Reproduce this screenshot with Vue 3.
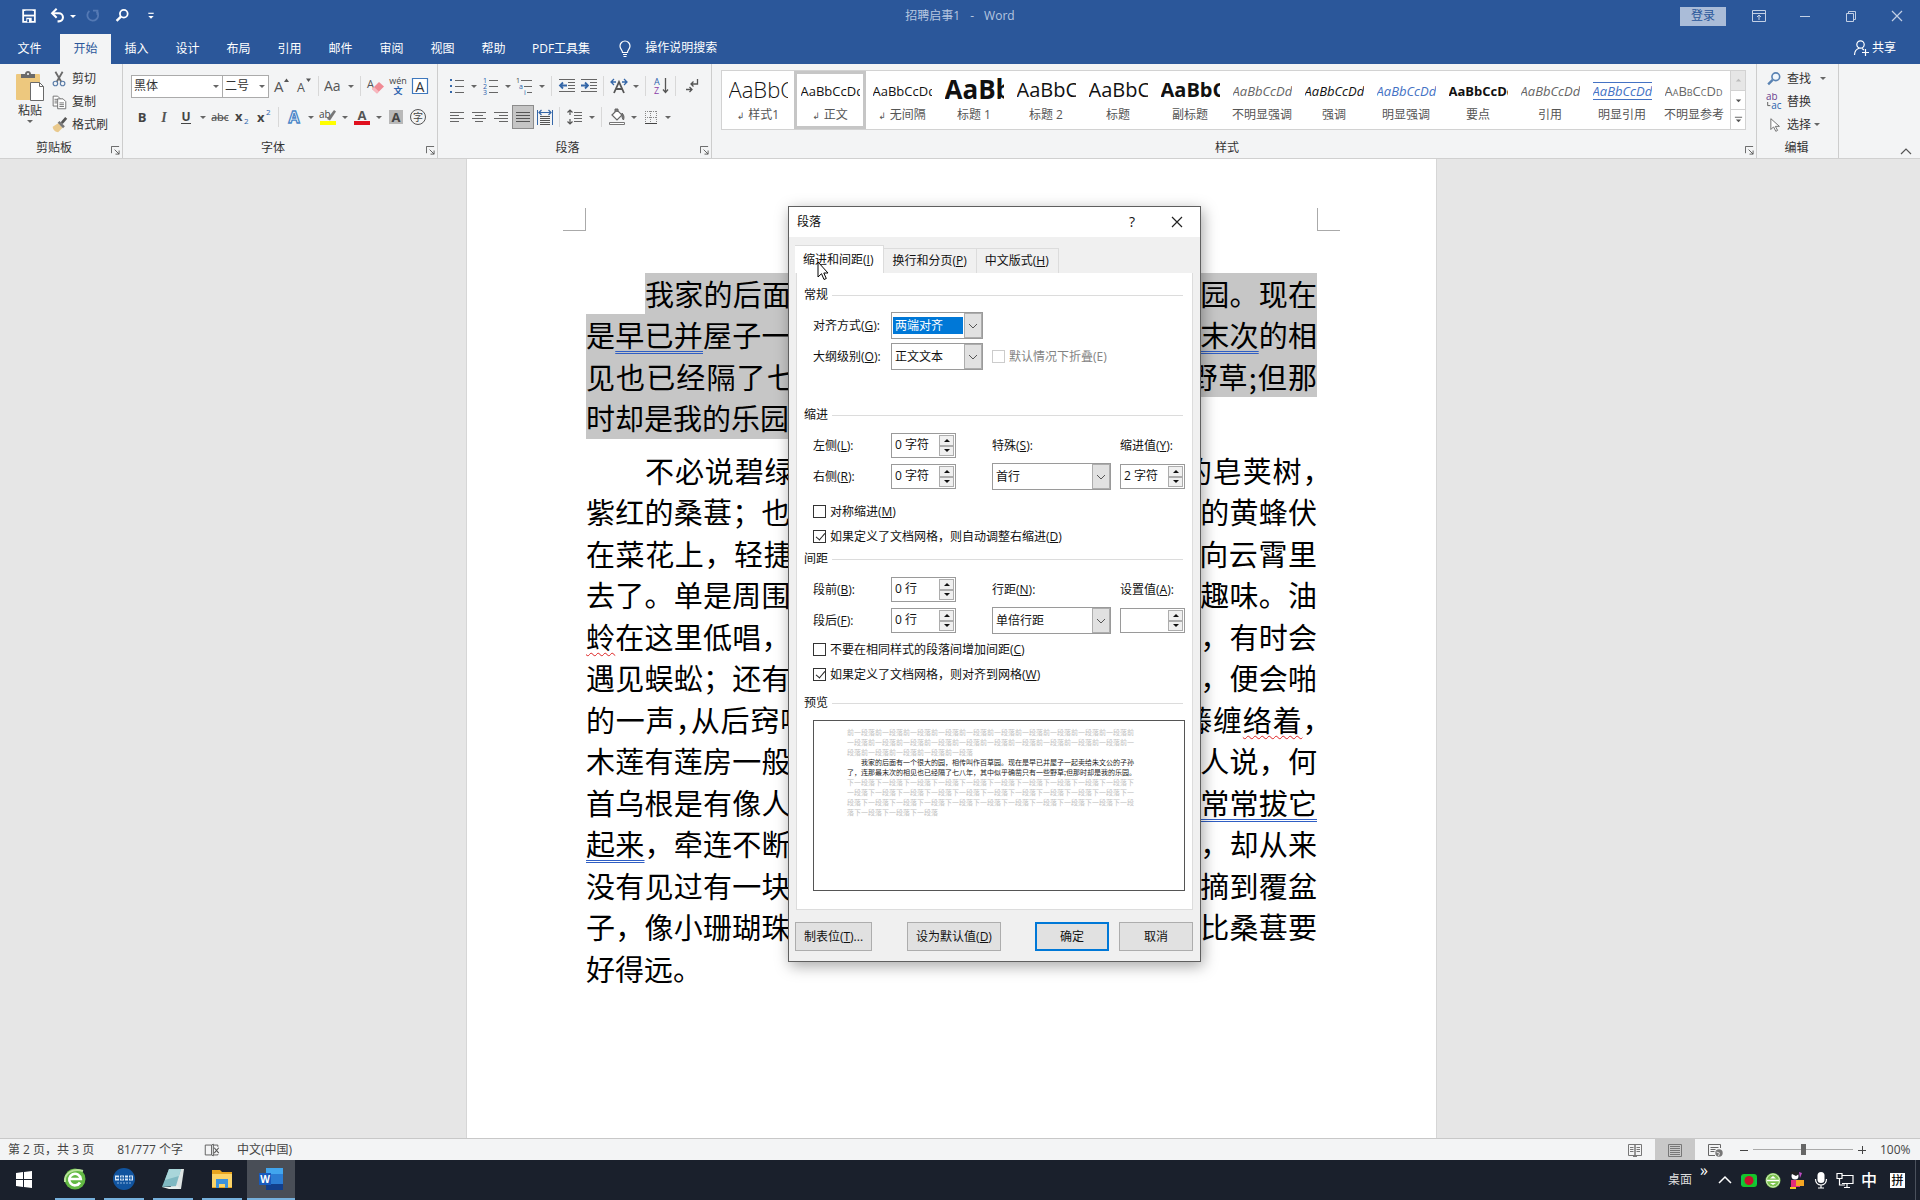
<script setup>
import { ref } from 'vue'

const icons = {
  save: '<path d="M3.500 3.500h13v13h-13z" fill="none" stroke="#fff" stroke-width="2"/><path d="M6 4h8v5H6z" fill="#2b579a"/><path d="M4 9.500h12" stroke="#fff" stroke-width="2"/><path d="M7 12h6v5H7z" fill="#fff"/><path d="M8 13.500h2V17H8z" fill="#2b579a"/>',
  undo: '<path d="M4 7h7a4.500 4.500 0 0 1 0 9H9.500" fill="none" stroke="#fff" stroke-width="2.300"/><path d="M8.500 2 3.500 7l5 5" fill="none" stroke="#fff" stroke-width="2.300"/>',
  redo: '<path d="M6 4.500A6 6 0 1 0 14 5" fill="none" stroke="#5479b4" stroke-width="2"/><path d="M10 4h5v5" fill="none" stroke="#5479b4" stroke-width="2"/>',
  find: '<circle cx="12" cy="7.500" r="4.300" fill="none" stroke="#fff" stroke-width="2"/><path d="M8.800 10.700 4 15.500" stroke="#fff" stroke-width="2.600"/>',
  custom: '<path d="M7 7h6" stroke="#fff" stroke-width="1.300"/><path d="M7 10h6l-3 3z" fill="#fff"/>',
  ribbon: '<path d="M3.500 4.500h13v11h-13zM3.500 7.500h13" fill="none" stroke="#c3d0e5"/><path d="M10 14V9.500M8 11l2-2 2 2" fill="none" stroke="#c3d0e5"/>',
  min: '<path d="M5 10.500h10" stroke="#c3d0e5"/>',
  restore: '<path d="M5.500 7.500h7v8h-7zM7.500 7V5.500h7v8H13" fill="none" stroke="#c3d0e5"/>',
  close: '<path d="m5 5 10 10M15 5 5 15" stroke="#c3d0e5" stroke-width="1.200"/>',
  bulb: '<path d="M7.500 14.500c0-2.500-2.500-3.300-2.500-6.500a5 5 0 0 1 10 0c0 3.200-2.500 4-2.500 6.500zM8 16.500h4M8.500 18.500h3" fill="none" stroke="#fff" stroke-width="1.200"/>',
  share: '<circle cx="9.500" cy="6.500" r="3.700" fill="none" stroke="#fff" stroke-width="1.200"/><path d="M3.500 17c0-4 2-6 5-7M11 10.500l2 1.500M14.500 11v7M11 14.500h7" fill="none" stroke="#fff" stroke-width="1.200"/>',
  cut: '<path d="m6 2 6.500 11M14 2 7.500 13" stroke="#6a6a6a" stroke-width="2"/><circle cx="6" cy="15" r="2.500" fill="none" stroke="#5b7da8" stroke-width="1.300"/><circle cx="14" cy="15" r="2.500" fill="none" stroke="#5b7da8" stroke-width="1.300"/>',
  copy: '<path d="M3.500 3.500h5l3 3v8h-8z" fill="#fff" stroke="#6a6a6a"/><path d="M5 7h4M5 9h3M5 11h3" stroke="#6a6a6a"/><path d="M8.500 6.500h6l3 3v8h-9z" fill="#fff" stroke="#6a6a6a"/><path d="M10.500 11h5M10.500 13h5M10.500 15h5" stroke="#6a6a6a"/>',
  brush: '<path d="m3 12 6-4 5 5-5 5c-3 0-6-3-6-6z" fill="#e9c98d"/><path d="m8.500 7.500 2-2 6 6-2 2z" fill="#777"/><path d="m13 8 5-6" stroke="#555" stroke-width="3"/>',
  grow: '<text x="2" y="16" font-size="15" fill="#555">A</text><path d="m12 6 2.500-3.500L17 6z" fill="#555"/>',
  shrink: '<text x="3" y="16" font-size="12.500" fill="#555">A</text><path d="m12 2.500 2.500 3.500L17 2.500z" fill="#555"/>',
  aa: '<text x="0" y="15" font-size="14" fill="#555">Aa</text>',
  eraser: '<text x="1" y="12" font-size="11" fill="#555">A</text><path d="m6 13 7-7 5 4.500-7 7z" fill="#f08a94"/><path d="m6 13 2-2 5 4.500-2 2z" fill="#f8b8bf"/>',
  pinyin: '<text x="10" y="8" text-anchor="middle" font-size="9" fill="#444">wén</text><text x="10" y="18" text-anchor="middle" font-size="9" fill="#2b62ad" font-weight="700">文</text>',
  boxa: '<path d="M2.500 2.500h15v15h-15z" fill="#fff" stroke="#3f78bd" stroke-width="1.200"/><text x="10" y="15.500" text-anchor="middle" font-size="14" fill="#333">A</text>',
  bold: '<text x="10" y="15" text-anchor="middle" font-size="13" font-weight="700" fill="#444">B</text>',
  italic: '<text x="10" y="15" text-anchor="middle" font-size="14" font-style="italic" font-family="Liberation Serif" font-weight="700" fill="#555">I</text>',
  underline: '<text x="10" y="14" text-anchor="middle" font-size="12" font-weight="700" fill="#444">U</text><path d="M5 16.500h10" stroke="#444"/>',
  strike: '<text x="10" y="14" text-anchor="middle" font-size="11" fill="#444">abc</text><path d="M2 11h16" stroke="#444"/>',
  sub: '<text x="3" y="14" font-size="13" font-weight="700" fill="#444">x</text><text x="12" y="17" font-size="8" fill="#2b62ad">2</text>',
  sup: '<text x="3" y="15" font-size="13" font-weight="700" fill="#444">x</text><text x="12" y="8" font-size="8" fill="#2b62ad">2</text>',
  effect: '<text x="10" y="15.500" text-anchor="middle" font-size="16" font-weight="700" fill="#fff" stroke="#4a86c8" stroke-width="1.300">A</text>',
  marker: '<text x="1" y="11" font-size="10" fill="#444">ab</text><path d="m9 12 7-9 2 1.500-6 9z" fill="#777"/><path d="M2 14h16v4H2z" fill="#ff0"/>',
  color: '<text x="10" y="13" text-anchor="middle" font-size="13" font-weight="700" fill="#555">A</text><path d="M2 14h16v4H2z" fill="#e0101e"/>',
  shade: '<path d="M3 3h14v14H3z" fill="#b8b8b8"/><text x="10" y="15" text-anchor="middle" font-size="13" font-weight="700" fill="#444">A</text>',
  circle: '<circle cx="10" cy="10" r="7.500" fill="none" stroke="#555"/><text x="10" y="14" text-anchor="middle" font-size="10" fill="#444">字</text>',
  bullets: '<path d="M3 3h2v2H3zM3 9h2v2H3zM3 15h2v2H3z" fill="#3567a8"/><path d="M8 4.500h9M8 10.500h9M8 16.500h9" stroke="#666"/>',
  numbers: '<text x="2" y="6.500" font-size="7" fill="#2b62ad">1</text><text x="2" y="12.500" font-size="7" fill="#2b62ad">2</text><text x="2" y="18.500" font-size="7" fill="#2b62ad">3</text><path d="M8 4.500h9M8 10.500h9M8 16.500h9" stroke="#666"/>',
  multi: '<text x="1" y="6.500" font-size="7" fill="#444">1</text><text x="4" y="13" font-size="7" fill="#2b62ad">a</text><text x="9" y="18.500" font-size="7" fill="#2b62ad">i</text><path d="M6 4.500h11M9 10.500h8M12 16.500h5" stroke="#666"/>',
  outdent: '<path d="M2 3.500h16M11 6.500h7M11 9.500h7M11 12.500h7M2 15.500h16" stroke="#666"/><path d="M10 9.500H4M6 6.500l-3 3 3 3" fill="none" stroke="#3567a8" stroke-width="1.800"/>',
  indent: '<path d="M2 3.500h16M11 6.500h7M11 9.500h7M11 12.500h7M2 15.500h16" stroke="#666"/><path d="M2 9.500h6M6 6.500l3 3-3 3" fill="none" stroke="#3567a8" stroke-width="1.800"/>',
  chlayout: '<path d="m5 17 5-11 5 11M7 13h6" fill="none" stroke="#555" stroke-width="1.800"/><path d="M5 3 2 6l3 3M2 6h5M15 3l3 3-3 3M18 6h-5" fill="none" stroke="#3567a8" stroke-width="1.300"/>',
  sort: '<text x="3" y="9" font-size="9" fill="#2b62ad">A</text><text x="3" y="18" font-size="9" fill="#8a3fa8">Z</text><path d="M14.500 2v14M12 13.500l2.500 3 2.500-3" fill="none" stroke="#555" stroke-width="1.300"/>',
  marks: '<path d="M16.500 3v5H10M12.500 5.500 10 8l2.500 2.500M5 13.500h6M8.500 11l2.500 2.500L8.500 16" fill="none" stroke="#555" stroke-width="1.300"/>',
  left: '<path d="M3 5.500h14M3 8.500h9M3 11.500h14M3 14.500h9" stroke="#666"/>',
  center: '<path d="M3 5.500h14M6 8.500h8M3 11.500h14M6 14.500h8" stroke="#666"/>',
  right: '<path d="M3 5.500h14M8 8.500h9M3 11.500h14M8 14.500h9" stroke="#666"/>',
  justify: '<path d="M3 5.500h14M3 8.500h14M3 11.500h14M3 14.500h14" stroke="#555"/>',
  dist: '<path d="M2.500 3v15M17.500 3v15" stroke="#3567a8"/><path d="M4 5.500h12M6.500 3 4 5.500 6.500 8M13.500 3 16 5.500 13.500 8" fill="none" stroke="#3567a8" stroke-width="1.200"/><path d="M5 9.500h10M5 11.500h10M5 13.500h10M5 15.500h10M5 17.500h10" stroke="#555"/>',
  spacing: '<path d="M5 3v5M2.500 5.500 5 3l2.500 2.500M5 12v5M2.500 14.500 5 17l2.500-2.500" fill="none" stroke="#555" stroke-width="1.200"/><path d="M9 5.500h8M9 8.500h8M9 11.500h8M9 14.500h8" stroke="#666"/>',
  bucket: '<path d="m5 8 5-5 5 5-5 5z" fill="#fff" stroke="#666" stroke-width="1.200"/><path d="M8 5V2h3v3M15 6c2 2 2.500 4 1.500 7-1-1-2-3-1.500-7z" fill="#777" stroke="#666"/><path d="M2.500 15.500h15v2h-15z" fill="#fff" stroke="#777"/>',
  borders: '<path d="M4.500 4v12M9.500 4v12M15.500 4v12M4 4.500h12M4 10.500h12" stroke="#888" stroke-dasharray="1 1"/><path d="M4 16.500h12" stroke="#444"/>',
  find2: '<circle cx="12" cy="7.500" r="4.300" fill="#f2f7fc" stroke="#5a83b3" stroke-width="1.800"/><path d="M8.500 11 3.500 16" stroke="#5a83b3" stroke-width="2.600"/>',
  replace: '<text x="1" y="8" font-size="11" fill="#6b3f8f">ab</text><text x="7" y="18" font-size="11" fill="#2b62ad">ac</text><path d="M3 10v4h3" fill="none" stroke="#555"/>',
  select: '<path d="M6.500 3v12l3-3 2.500 5 2-1-2.500-4.500H16z" fill="#fff" stroke="#666"/>',
  proof: '<path d="M9.500 4.500h-7v11h7zM9.500 4.500l2-1v13l-2-1M11.500 4.500h5v2M11.500 15.500h5v-1" fill="none" stroke="#555"/><path d="m12.500 7.500 5 6M17.500 7.500l-5 6" stroke="#555" stroke-width="1.200"/>',
  read: '<path d="M3.500 4.500h6.500v11H3.500zM10 4.500h6.500v11H10zM8 16.500h4M5 7.500h3.500M5 9.500h3.500M5 11.500h3.500M11.500 7.500H15M11.500 9.500H15M11.500 11.500H15" fill="none" stroke="#777"/>',
  print: '<path d="M3.500 4.500h13v12h-13zM5 6.500h10M5 8.500h10M5 10.500h10M5 12.500h10M5 14.500h10" fill="none" stroke="#777"/>',
  web: '<path d="M10 15.500H3.500v-11h12V8M5.500 7.500h8M5.500 9.500h5M5.500 11.500h4" fill="none" stroke="#666"/><circle cx="14" cy="13" r="3.700" fill="#777"/><path d="m11.500 12 3 1-1 3" stroke="#ddd" fill="none"/>'
}

const windowTools = [['ribbon', '功能区显示选项'], ['min', '最小化'], ['restore', '还原'], ['close', '关闭']]
const tabs = ['插入', '设计', '布局', '引用', '邮件', '审阅', '视图', '帮助', 'PDF工具集']

const C = 'caret'
const S = 'sep'
const fontTop = ['grow', 'shrink', S, 'aa', C, S, 'eraser', 'pinyin', 'boxa']
const fontBottom = ['bold', 'italic', 'underline', C, 'strike', 'sub', 'sup', S, 'effect', C, 'marker', C, 'color', C, 'shade', 'circle']
const paraTop = ['bullets', C, 'numbers', C, 'multi', C, S, 'outdent', 'indent', S, 'chlayout', C, S, 'sort', S, 'marks']
const paraBottom = ['left', 'center', 'right', 'justify', 'dist', S, 'spacing', C, S, 'bucket', C, 'borders', C]

const styles = [
  { name: '样式1', kind: 'large', mark: true },
  { name: '正文', kind: 'body', mark: true, current: true },
  { name: '无间隔', kind: 'body', mark: true },
  { name: '标题 1', kind: 'title1' },
  { name: '标题 2', kind: 'title2' },
  { name: '标题', kind: 'title2' },
  { name: '副标题', kind: 'title2 strong' },
  { name: '不明显强调', kind: 'body slanted muted' },
  { name: '强调', kind: 'body slanted' },
  { name: '明显强调', kind: 'body slanted blue' },
  { name: '要点', kind: 'body strong' },
  { name: '引用', kind: 'body slanted muted' },
  { name: '明显引用', kind: 'body slanted blue ruled' },
  { name: '不明显参考', kind: 'body caps muted' }
]

// Runs: plain text, or [text, mark]; mark is a grammar or spelling line, or half-width punctuation.
const first = [
  ['我家的后面有一个很大的园，相传叫作百草园。现在'],
  ['是', ['早已并', 'grammar'], '屋子一起卖给朱文公的子孙了，', ['连那最末次', 'grammar'], '的相'],
  ['见也已经隔了七八年，其中似乎确凿只有一些野草;但那'],
  ['时却是我的乐园。']
]
const second = [
  ['不必说碧绿的菜畦，光滑的石井栏，高大的皂荚树', ['，', 'half']],
  ['紫红的桑葚；也不必说鸣蝉在树叶里长吟，肥胖的黄蜂伏'],
  ['在菜花上，轻捷的叫天子(云雀)忽然从草间直窜向云霄里'],
  ['去了。单是周围的短短的泥墙根一带，就有无限趣味。油'],
  [['蛉', 'spelling'], '在这里低唱，蟋蟀们在这里弹琴。翻开断砖来，有时会'],
  ['遇见蜈蚣；还有斑蝥，倘若用手指按住它的脊梁，便会啪'],
  [['的一声，从后窍喷出一阵烟雾。何首乌藤和木莲藤缠', 'half'], ['络着', 'spelling'], ['，', 'half']],
  ['木莲有莲房一般的果实，何首乌有臃肿的根。有人说，何'],
  ['首乌根是有像人形的，吃了便可以成仙，我于是', ['常常拔它', 'grammar']],
  [['起来', 'grammar'], '，牵连不断地拔起来，也曾因此弄坏了泥墙，却从来'],
  ['没有见过有一块根像人样。如果不怕刺，还可以摘到覆盆'],
  ['子，像小珊瑚珠攒成的小球，又酸又甜，色味都比桑葚要'],
  ['好得远。']
]
const runText = (r) => (Array.isArray(r) ? r[0] : r)
const runMark = (r) => (Array.isArray(r) ? r[1] : '')

const fontName = ref('黑体')
const fontSize = ref('二号')
const zoomLevel = ref(50)
const before = '前一段落'.repeat(25)
const after = '下一段落'.repeat(34)
</script>

<template>
  <div class="app">
    <header class="top">
      <div class="titlebar">
        <div class="quick">
          <button class="q" aria-label="保存"><svg viewBox="0 0 20 20" v-html="icons.save"></svg></button>
          <button class="q" aria-label="撤消"><svg viewBox="0 0 20 20" v-html="icons.undo"></svg></button>
          <i class="caret light"></i>
          <button class="q" aria-label="重复"><svg viewBox="0 0 20 20" v-html="icons.redo"></svg></button>
          <button class="q" aria-label="查找"><svg viewBox="0 0 20 20" v-html="icons.find"></svg></button>
          <button class="q" aria-label="自定义"><svg viewBox="0 0 20 20" v-html="icons.custom"></svg></button>
        </div>
        <div class="doc-name"><span>招聘启事1</span><span>-</span><span>Word</span></div>
        <div class="win">
          <button class="login">登录</button>
          <button v-for="t in windowTools" :key="t[0]" class="wbtn" :aria-label="t[1]"><svg viewBox="0 0 20 20" v-html="icons[t[0]]"></svg></button>
        </div>
      </div>
      <nav class="tabs">
        <button class="tab file">文件</button>
        <button class="tab active">开始</button>
        <button v-for="t in tabs" :key="t" class="tab">{{ t }}</button>
        <button class="tell"><svg viewBox="0 0 20 20" v-html="icons.bulb"></svg>操作说明搜索</button>
        <button class="share"><svg viewBox="0 0 20 20" v-html="icons.share"></svg>共享</button>
      </nav>
    </header>

    <section class="ribbon">
      <div class="group clip">
        <div class="clip-body">
          <button class="paste">
            <svg viewBox="0 0 30 32"><rect x="1" y="4" width="24" height="26" rx="1" fill="#edc87e" /><path d="M6 8V4h4c0-4 6-4 6 0h4v4z" fill="#6a6a6a" /><circle cx="13" cy="4" r="1" fill="#fff" /><path d="M15.500 12.500h9l4 4v14h-13z" fill="#fff" stroke="#6a6a6a" /><path d="M24.500 12.500v4h4" fill="none" stroke="#6a6a6a" /></svg>
            <span>粘贴</span><i class="caret"></i>
          </button>
          <div class="stack">
            <button class="cmd"><svg viewBox="0 0 20 20" v-html="icons.cut"></svg>剪切</button>
            <button class="cmd"><svg viewBox="0 0 20 20" v-html="icons.copy"></svg>复制</button>
            <button class="cmd"><svg viewBox="0 0 20 20" v-html="icons.brush"></svg>格式刷</button>
          </div>
        </div>
        <div class="foot"><span>剪贴板</span><svg class="launch" viewBox="0 0 10 10"><path d="M.5 8V.5H9M4 4l5 5M9 5v4H5" fill="none" stroke="#555" /></svg></div>
      </div>

      <div class="group font">
        <div class="tools">
          <label class="fbox name"><input v-model="fontName" aria-label="字体" /><i class="caret"></i></label>
          <label class="fbox size"><input v-model="fontSize" aria-label="字号" /><i class="caret"></i></label>
          <template v-for="(k, i) in fontTop" :key="i">
            <i v-if="k === 'caret'" class="caret"></i><i v-else-if="k === 'sep'" class="sep"></i>
            <button v-else class="tool" :aria-label="k"><svg viewBox="0 0 20 20" v-html="icons[k]"></svg></button>
          </template>
        </div>
        <div class="tools">
          <template v-for="(k, i) in fontBottom" :key="i">
            <i v-if="k === 'caret'" class="caret"></i><i v-else-if="k === 'sep'" class="sep"></i>
            <button v-else class="tool" :aria-label="k"><svg viewBox="0 0 20 20" v-html="icons[k]"></svg></button>
          </template>
        </div>
        <div class="foot"><span>字体</span><svg class="launch" viewBox="0 0 10 10"><path d="M.5 8V.5H9M4 4l5 5M9 5v4H5" fill="none" stroke="#555" /></svg></div>
      </div>

      <div class="group para">
        <div class="tools">
          <template v-for="(k, i) in paraTop" :key="i">
            <i v-if="k === 'caret'" class="caret"></i><i v-else-if="k === 'sep'" class="sep"></i>
            <button v-else class="tool" :aria-label="k"><svg viewBox="0 0 20 20" v-html="icons[k]"></svg></button>
          </template>
        </div>
        <div class="tools">
          <template v-for="(k, i) in paraBottom" :key="i">
            <i v-if="k === 'caret'" class="caret"></i><i v-else-if="k === 'sep'" class="sep"></i>
            <button v-else class="tool" :class="{ on: k === 'justify' }" :aria-label="k"><svg viewBox="0 0 20 20" v-html="icons[k]"></svg></button>
          </template>
        </div>
        <div class="foot"><span>段落</span><svg class="launch" viewBox="0 0 10 10"><path d="M.5 8V.5H9M4 4l5 5M9 5v4H5" fill="none" stroke="#555" /></svg></div>
      </div>

      <div class="group styles">
        <div class="gallery">
          <button v-for="s in styles" :key="s.name" class="card" :class="{ current: s.current }">
            <span class="sample" :class="s.kind">AaBbCcDd</span>
            <span class="style-name"><small v-if="s.mark">↲</small>{{ s.name }}</span>
          </button>
          <div class="scroll">
            <button class="dim" aria-label="上一行"><svg viewBox="0 0 10 10"><path d="M2 6h6L5 3z" fill="#bbb" /></svg></button>
            <button aria-label="下一行"><svg viewBox="0 0 10 10"><path d="M2 4h6L5 7z" fill="#555" /></svg></button>
            <button aria-label="其他"><svg viewBox="0 0 10 10"><path d="M2 5h6L5 8z" fill="#555" /><path d="M1 2.500h8" stroke="#555" /></svg></button>
          </div>
        </div>
        <div class="foot"><span>样式</span><svg class="launch" viewBox="0 0 10 10"><path d="M.5 8V.5H9M4 4l5 5M9 5v4H5" fill="none" stroke="#555" /></svg></div>
      </div>

      <div class="group edit">
        <div class="stack">
          <button class="cmd"><svg viewBox="0 0 20 20" v-html="icons.find2"></svg>查找<i class="caret far"></i></button>
          <button class="cmd"><svg viewBox="0 0 20 20" v-html="icons.replace"></svg>替换</button>
          <button class="cmd"><svg viewBox="0 0 20 20" v-html="icons.select"></svg>选择<i class="caret"></i></button>
        </div>
        <div class="foot"><span>编辑</span></div>
      </div>
      <div class="ribbon-end">
        <button aria-label="折叠功能区"><svg viewBox="0 0 12 8"><path d="m1 7 5-5 5 5" fill="none" stroke="#555" stroke-width="1.200" /></svg></button>
      </div>
    </section>

    <main class="workspace">
      <article class="page">
        <div class="corners"><i></i><i></i></div>
        <div class="text selected">
          <div v-for="(l, i) in first" :key="i" class="line" :class="{ start: i === 0, last: i === first.length - 1 }">
            <span class="hl"><span v-for="(r, j) in l" :key="j" :class="runMark(r)">{{ runText(r) }}</span></span>
          </div>
        </div>
        <div class="text">
          <div v-for="(l, i) in second" :key="i" class="line" :class="{ start: i === 0, last: i === second.length - 1 }">
            <span v-for="(r, j) in l" :key="j" :class="runMark(r)">{{ runText(r) }}</span>
          </div>
        </div>
      </article>
    </main>

    <footer class="status">
      <span class="pages">第 2 页，共 3 页</span>
      <span class="words">81/777 个字</span>
      <svg class="proof" viewBox="0 0 20 20" v-html="icons.proof"></svg>
      <span>中文(中国)</span>
      <div class="views">
        <button class="view" aria-label="阅读视图"><svg viewBox="0 0 20 20" v-html="icons.read"></svg></button>
        <button class="view on" aria-label="页面视图"><svg viewBox="0 0 20 20" v-html="icons.print"></svg></button>
        <button class="view" aria-label="Web 版式视图"><svg viewBox="0 0 20 20" v-html="icons.web"></svg></button>
        <button class="step" aria-label="缩小"><svg viewBox="0 0 10 10"><path d="M1 5.500h8" stroke="#444" /></svg></button>
        <input v-model="zoomLevel" type="range" min="0" max="100" aria-label="显示比例" />
        <button class="step" aria-label="放大"><svg viewBox="0 0 10 10"><path d="M1 5.500h8M5.500 1v8" stroke="#444" /></svg></button>
        <span class="pct">100%</span>
      </div>
    </footer>

    <div class="taskbar">
      <button class="app-btn plain" aria-label="开始"><svg viewBox="0 0 24 24"><path d="m4 6 7-1v7H4zM12 5l8-1v8h-8zM4 13h7v7l-7-1zM12 13h8v8l-8-1z" fill="#fff" /></svg></button>
      <button class="app-btn" aria-label="浏览器"><svg viewBox="0 0 24 24"><circle cx="12" cy="12" r="10.500" fill="#63b944" /><path d="M2 15C1 6 10 1 20 4" stroke="#b9e29a" stroke-width="2" fill="none" /><path d="M17 15.500A5.800 5.800 0 1 1 17.800 12H7" fill="none" stroke="#fff" stroke-width="2.600" /></svg></button>
      <button class="app-btn" aria-label="应用"><svg viewBox="0 0 24 24"><circle cx="12" cy="12" r="11" fill="#11549f" /><path d="M3 8.500h4v5H3zM8 8.500h4v5H8zM13 8.500h3v5h-3zM17 8.500h4v5h-4z" fill="#d6e6f7" /><path d="M4 11h16M5 10v2M10 9v4M19 9v4" stroke="#11549f" /><path d="M5 16h14" stroke="#8fb5de" stroke-dasharray="2 1" /></svg></button>
      <button class="app-btn" aria-label="记事本"><svg viewBox="0 0 24 24"><path d="M8 2h15l-3 20H10z" fill="#dfe5e4" /><path d="M8 2h12l-5 17L1 20z" fill="#7fb9c2" /><path d="M8 2h12l-2 7L4 13z" fill="#a9d6da" /><path d="M1 20h14l1-2 3 4H8z" fill="#e9efed" /></svg></button>
      <button class="app-btn" aria-label="文件资源管理器"><svg viewBox="0 0 24 24"><path d="M2 3h8l2 2h10v16H2z" fill="#e8a520" /><path d="M2 7h20v13H2z" fill="#fbd468" /><path d="M6 12h12v9h-3v-4H9v4H6z" fill="#3c92dc" /></svg></button>
      <button class="app-btn word" aria-label="Word"><svg viewBox="0 0 24 24"><rect x="7" y="1" width="17" height="22" fill="#2b7cd3" /><path d="M7 1h17v6H7z" fill="#41a5ee" /><path d="M7 17h17v6H7z" fill="#123f8c" /><rect x="0" y="6" width="12" height="12" fill="#185abd" /><text x="6" y="15.500" text-anchor="middle" font-size="10" font-weight="700" fill="#fff">W</text></svg></button>
      <div class="tray">
        <span class="desk">桌面</span><span class="more">»</span>
        <svg viewBox="0 0 20 20"><path d="m4 13 6-6 6 6" fill="none" stroke="#fff" stroke-width="1.500" /></svg>
        <svg viewBox="0 0 20 20"><rect x="2" y="4" width="16" height="13" rx="3" fill="#16c42a" /><circle cx="10" cy="10.500" r="4.500" fill="#c8102e" /><path d="M3 6v9M17 8v6" stroke="#0c6" /></svg>
        <svg viewBox="0 0 20 20"><circle cx="10" cy="10.500" r="7.500" fill="#7cc34f" /><path d="M4 10.500h12" stroke="#fff" stroke-width="1.500" /><path d="M7 8.500h6L10 6zM7 13h6l-3 2z" fill="#fff" /><circle cx="10" cy="10.500" r="6.500" fill="none" stroke="#d7f0c4" /></svg>
        <svg viewBox="0 0 20 20"><circle cx="8" cy="6" r="3.500" fill="#fff" /><path d="M3 3c3-2 7-2 9 1L9 6z" fill="#222" /><path d="M4 10h9v7H4z" fill="#e42b7a" /><path d="m12 2 3 1-2 5z" fill="#c04cc4" /><path d="M9 10h8v6H9z" fill="#f5a623" /><path d="M3 17h6v2H3z" fill="#f5c623" /></svg>
        <svg viewBox="0 0 20 20"><rect x="6.500" y="2" width="7" height="11" rx="3.500" fill="#fff" /><path d="M4.500 9c0 8 11 8 11 0M10 15v3M7 18h6" fill="none" stroke="#fff" stroke-width="1.200" /></svg>
        <svg viewBox="0 0 20 20"><path d="M7 5.500h11v8H7M12 14v3M9 17.500h6M2 3.500h5v5H2zM4.500 9v6H10" fill="none" stroke="#fff" stroke-width="1.200" /></svg>
        <span class="ime">中</span>
        <span class="ime pin">拼</span>
      </div>
    </div>

    <div class="dialog" role="dialog" aria-label="段落">
      <div class="d-title">
        <span>段落</span>
        <button class="help" aria-label="帮助">?</button>
        <button class="x" aria-label="关闭"><svg viewBox="0 0 12 12"><path d="m1 1 10 10M11 1 1 11" stroke="#222" stroke-width="1.200" /></svg></button>
      </div>
      <div class="d-tabs">
        <button class="d-tab on">缩进和间距(<u>I</u>)</button>
        <button class="d-tab">换行和分页(<u>P</u>)</button>
        <button class="d-tab">中文版式(<u>H</u>)</button>
      </div>
      <div class="panel">
        <h3 class="head">常规</h3>
        <div class="row">
          <label for="align">对齐方式(<u>G</u>):</label>
          <div class="combo short picked"><select id="align"><option>两端对齐</option></select><i class="arrow"><svg viewBox="0 0 10 6"><path d="m1 1 4 4 4-4" fill="none" stroke="#555" /></svg></i></div>
        </div>
        <div class="row">
          <label for="level">大纲级别(<u>O</u>):</label>
          <div class="combo short"><select id="level"><option>正文文本</option></select><i class="arrow"><svg viewBox="0 0 10 6"><path d="m1 1 4 4 4-4" fill="none" stroke="#555" /></svg></i></div>
          <label class="check span off"><input type="checkbox" disabled />默认情况下折叠(E)</label>
        </div>

        <h3 class="head later">缩进</h3>
        <div class="row">
          <label for="il">左侧(<u>L</u>):</label>
          <div class="spin"><input id="il" value="0 字符" /><div><button aria-label="增加"><i class="up"></i></button><button aria-label="减少"><i class="down"></i></button></div></div>
          <label for="sp">特殊(<u>S</u>):</label>
          <label for="iv">缩进值(<u>Y</u>):</label>
        </div>
        <div class="row">
          <label for="ir">右侧(<u>R</u>):</label>
          <div class="spin"><input id="ir" value="0 字符" /><div><button aria-label="增加"><i class="up"></i></button><button aria-label="减少"><i class="down"></i></button></div></div>
          <div class="combo"><select id="sp"><option>首行</option></select><i class="arrow"><svg viewBox="0 0 10 6"><path d="m1 1 4 4 4-4" fill="none" stroke="#555" /></svg></i></div>
          <div class="spin"><input id="iv" value="2 字符" /><div><button aria-label="增加"><i class="up"></i></button><button aria-label="减少"><i class="down"></i></button></div></div>
        </div>
        <div class="checks wide">
          <label class="check"><input type="checkbox" />对称缩进(<u>M</u>)</label>
          <label class="check"><input type="checkbox" checked />如果定义了文档网格，则自动调整右缩进(<u>D</u>)</label>
        </div>

        <h3 class="head">间距</h3>
        <div class="row">
          <label for="sb">段前(<u>B</u>):</label>
          <div class="spin"><input id="sb" value="0 行" /><div><button aria-label="增加"><i class="up"></i></button><button aria-label="减少"><i class="down"></i></button></div></div>
          <label for="ls">行距(<u>N</u>):</label>
          <label for="lv">设置值(<u>A</u>):</label>
        </div>
        <div class="row">
          <label for="sa">段后(<u>F</u>):</label>
          <div class="spin"><input id="sa" value="0 行" /><div><button aria-label="增加"><i class="up"></i></button><button aria-label="减少"><i class="down"></i></button></div></div>
          <div class="combo"><select id="ls"><option>单倍行距</option></select><i class="arrow"><svg viewBox="0 0 10 6"><path d="m1 1 4 4 4-4" fill="none" stroke="#555" /></svg></i></div>
          <div class="spin"><input id="lv" value="" /><div><button aria-label="增加"><i class="up"></i></button><button aria-label="减少"><i class="down"></i></button></div></div>
        </div>
        <div class="checks">
          <label class="check"><input type="checkbox" />不要在相同样式的段落间增加间距(<u>C</u>)</label>
          <label class="check"><input type="checkbox" checked />如果定义了文档网格，则对齐到网格(<u>W</u>)</label>
        </div>

        <h3 class="head preview-head">预览</h3>
        <div class="preview">
          <p>{{ before }}</p>
          <p class="now first">我家的后面有一个很大的园，相传叫作百草园。现在是早已并屋子一起卖给朱文公的子孙</p>
          <p class="now">了，连那最末次的相见也已经隔了七八年，其中似乎确凿只有一些野草;但那时却是我的乐园。</p>
          <p>{{ after }}</p>
        </div>
      </div>
      <div class="d-foot">
        <button class="btn tabstop">制表位(<u>T</u>)...</button>
        <button class="btn setdef">设为默认值(<u>D</u>)</button>
        <button class="btn ok">确定</button>
        <button class="btn">取消</button>
      </div>
      <svg class="pointer" viewBox="0 0 12 20"><path d="M1 1v15l3.500-3.300 2.500 5.800 2.300-1-2.500-5.500H11z" fill="#fff" stroke="#000" /></svg>
    </div>
  </div>
</template>

<style>
body {
  margin: 0;
}
</style>

<style scoped>
.app {
  position: relative;
  display: flex;
  flex-direction: column;
  height: 100vh;
  overflow: hidden;
  font: 12px/18px "Open Sans", "Noto Sans CJK SC", sans-serif;
  color: #333;
  background: #e6e6e6;
}
* {
  box-sizing: border-box;
}
button,
input,
select {
  font: inherit;
  color: inherit;
  margin: 0;
  padding: 0;
  border: 0;
  background: none;
  border-radius: 0;
  outline: 0;
  white-space: nowrap;
}
svg {
  display: block;
  width: 20px;
  height: 20px;
  flex: none;
}
.top {
  background: #2b579a;
  color: #fff;
}
.titlebar {
  display: grid;
  grid-template-columns: 1fr auto 1fr;
  align-items: center;
  height: 32px;
}
.quick {
  display: flex;
  align-items: center;
  padding-left: 20px;
}
.q svg {
  width: 18px;
  height: 18px;
}
.q {
  margin-right: 11px;
}
.q:nth-of-type(2) {
  margin-right: 0;
}
.quick .caret {
  margin-right: 5px;
}
.doc-name {
  display: flex;
  gap: 10px;
  color: #b5c6e0;
}
.win {
  display: flex;
  align-items: center;
  justify-content: flex-end;
  padding-right: 13px;
}
.login {
  width: 46px;
  height: 19px;
  line-height: 18px;
  background: #aabcd8;
  color: #2b579a;
  margin-right: 23px;
}
.wbtn {
  margin-left: 26px;
}
.login + .wbtn {
  margin-left: 0;
}
.tabs {
  display: flex;
  align-items: flex-end;
  height: 32px;
  padding-left: 4px;
}
.tab {
  min-width: 51px;
  height: 30px;
  padding: 0 13px;
}
.file {
  margin-right: 5px;
}
.active {
  background: #f3f4f5;
  color: #2b579a;
}
.tell,
.share {
  display: flex;
  align-items: center;
  height: 32px;
}
.tell {
  margin-left: 12px;
  gap: 10px;
}
.share {
  margin-left: auto;
  margin-right: 24px;
  gap: 1px;
}
.ribbon {
  display: flex;
  height: 95px;
  background: #f3f4f5;
  border-bottom: 1px solid #d0d0d0;
}
.group {
  display: flex;
  flex-direction: column;
  position: relative;
  padding: 10px 0 0 8px;
  gap: 7px;
  border-right: 1px solid #cdcdcd;
}
.foot {
  display: flex;
  margin-top: auto;
  height: 20px;
  align-items: center;
  justify-content: center;
  padding-right: 22px;
}
.launch {
  position: absolute;
  right: 2px;
  bottom: 3px;
  width: 9px;
  height: 9px;
}
.clip {
  width: 123px;
  padding-top: 3px;
  gap: 0;
}
.font {
  width: 315px;
}
.para {
  width: 274px;
}
.styles {
  flex: 1;
  min-width: 0;
  padding-top: 6px;
}
.edit {
  width: 82px;
  padding-top: 3px;
  gap: 0;
}
.edit .foot {
  padding-right: 10px;
}
.clip-body {
  display: flex;
  padding-left: 7px;
  gap: 5px;
}
.paste {
  display: flex;
  flex-direction: column;
  align-items: center;
  width: 30px;
  padding-top: 3px;
}
.paste svg {
  width: 30px;
  height: 32px;
}
.stack {
  display: flex;
  flex-direction: column;
}
.cmd {
  display: flex;
  align-items: center;
  height: 23px;
  gap: 4px;
}
.cmd svg {
  width: 18px;
  height: 18px;
}
.edit .cmd .caret {
  margin-left: -4px;
}
.edit .cmd .far {
  margin-left: 2px;
}
.tools {
  display: flex;
  align-items: center;
  height: 24px;
}
.fbox {
  display: flex;
  align-items: center;
  height: 23px;
  border: 1px solid #ababab;
  background: #fff;
}
.fbox input {
  flex: 1;
  min-width: 0;
  padding-left: 2px;
}
.name {
  width: 92px;
}
.size {
  width: 47px;
  margin-left: -1px;
  margin-right: 2px;
}
.tool {
  display: flex;
  align-items: center;
  justify-content: center;
  width: 22px;
  height: 24px;
}
.tool.on {
  background: #c5c5c5;
  border: 1px solid #8c8c8c;
}
.caret {
  display: flex;
  justify-content: center;
  width: 12px;
}
.caret::after {
  content: "";
  border: 3px solid transparent;
  border-top-color: #666;
  border-bottom: 0;
}
.light::after {
  border-top-color: #fff;
}
.sep {
  width: 1px;
  height: 20px;
  margin: 0 4px 0 3px;
  background: #d8d8d8;
}
.gallery {
  display: flex;
  height: 60px;
  align-self: flex-start;
  margin-left: 1px;
  background: #fff;
  border: 1px solid #d2d2d2;
}
.card {
  width: 72px;
  display: flex;
  flex-direction: column;
  align-items: center;
}
.current {
  box-shadow: inset 0 0 0 3px #c6c6c6;
}
.sample {
  width: 59px;
  height: 26px;
  margin-top: 7px;
  overflow: hidden;
  text-align: left;
  font-size: 13px;
  line-height: 26px;
  color: #111;
}
.large,
.title2 {
  font-size: 20px;
  line-height: 23px;
}
.large {
  font-size: 22px;
  font-weight: 300;
}
.title1 {
  font-size: 26px;
  line-height: 22px;
  font-weight: 700;
}
.strong {
  font-weight: 700;
}
.slanted {
  font-style: italic;
}
.muted {
  color: #666;
}
.blue {
  color: #4472c4;
}
.caps {
  font-variant: small-caps;
}
.ruled {
  height: 18px;
  line-height: 16px;
  margin: 11px 0 4px;
  border-top: 1px solid #4472c4;
  border-bottom: 1px solid #4472c4;
}
.style-name {
  color: #555;
  line-height: 22px;
}
.style-name small {
  font: 9px "DejaVu Sans", sans-serif;
  margin-right: 4px;
}
.scroll {
  display: flex;
  flex-direction: column;
  width: 15px;
  border-left: 1px solid #d2d2d2;
}
.scroll button {
  flex: 1;
  display: flex;
  align-items: center;
  justify-content: center;
  border-bottom: 1px solid #d2d2d2;
}
.scroll button:last-child {
  border-bottom: 0;
}
.scroll svg {
  width: 9px;
  height: 9px;
}
.scroll .dim {
  background: #e6e6e6;
}
.ribbon-end {
  display: flex;
  align-items: flex-end;
  justify-content: flex-end;
  width: 81px;
  padding: 0 8px 3px 0;
}
.ribbon-end svg {
  width: 12px;
  height: 8px;
}
.workspace {
  flex: 1;
  min-height: 0;
  display: flex;
  justify-content: center;
  padding-right: 17px;
  overflow: hidden;
}
.page {
  width: 969px;
  padding: 49px 119px 0;
  background: #fff;
  box-shadow: 0 0 0 1px #d6d6d6;
}
.corners {
  display: flex;
  justify-content: space-between;
  margin: 0 -23px 42px;
}
.corners i {
  width: 23px;
  height: 23px;
  border: solid #aaa;
  border-width: 0 1px 1px 0;
}
.corners i:last-child {
  border-width: 0 0 1px 1px;
}
.text {
  font-family: "Noto Sans CJK SC", sans-serif;
  font-size: 29px;
  line-height: 1.43;
  color: #000;
}
.selected {
  margin-bottom: 11px;
}
.line {
  text-align-last: justify;
  white-space: nowrap;
}
.last {
  text-align-last: left;
}
.start {
  padding-left: 59px;
}
.half {
  font-feature-settings: "halt";
}
.selected .line:not(.last) .hl {
  display: block;
  background: #c6c6c6;
}
.selected .last {
  background: #c6c6c6;
  width: 235px;
}
.grammar {
  text-decoration: underline double #2f5ec4 1px;
  text-underline-offset: 4px;
}
.spelling {
  text-decoration: underline wavy #d22 1px;
  text-underline-offset: 3px;
}
.status {
  display: flex;
  align-items: center;
  height: 22px;
  padding-left: 8px;
  background: #f3f4f5;
  border-top: 1px solid #c8c8c8;
  color: #444;
}
.pages {
  margin-right: 23px;
}
.words {
  margin-right: 20px;
}
.proof {
  width: 18px;
  height: 18px;
  margin-right: 16px;
}
.views {
  display: flex;
  align-items: center;
  margin-left: auto;
  padding-right: 6px;
}
.view {
  width: 40px;
  height: 21px;
  display: flex;
  align-items: center;
  justify-content: center;
}
.view.on {
  background: #c8c8c8;
}
.step svg {
  width: 10px;
  height: 10px;
}
.step {
  margin: 0 4px;
}
.step:first-of-type {
  margin-left: 5px;
}
.views input {
  appearance: none;
  width: 100px;
  height: 12px;
  background: linear-gradient(#aaa, #aaa) center / 100% 1px no-repeat;
}
.views input::-webkit-slider-thumb {
  appearance: none;
  width: 5px;
  height: 11px;
  background: #666;
}
.pct {
  margin-left: 9px;
  width: 34px;
}
.taskbar {
  display: flex;
  align-items: stretch;
  height: 40px;
  background: #1a202c;
}
.app-btn {
  width: 40px;
  margin-left: 9px;
  display: flex;
  align-items: center;
  justify-content: center;
  border-bottom: 2px solid #76b0dc;
}
.app-btn svg {
  width: 24px;
  height: 24px;
}
.plain {
  margin: 0 2px 0 4px;
  border-bottom-color: transparent;
}
.word {
  width: 48px;
  margin-left: 5px;
  background: #494e57;
}
.tray {
  display: flex;
  align-items: center;
  margin-left: auto;
  padding-right: 10px;
  gap: 4px;
  color: #fff;
  border-right: 1px solid #4b515c;
  margin-right: 4px;
}
.desk {
  color: #ddd;
}
.more {
  font-size: 16px;
  width: 15px;
  padding-left: 4px;
  margin-bottom: 20px;
}
.ime {
  width: 20px;
  font-size: 16px;
  font-weight: 500;
  text-align: center;
  margin-right: 7px;
}
.pin {
  width: 15px;
  height: 15px;
  line-height: 15px;
  font-size: 12px;
  background: #fff;
  color: #111;
  margin: 0;
}
.dialog {
  position: absolute;
  left: calc(50% - 172px);
  top: 206px;
  width: 413px;
  background: #f0f0f0;
  border: 1px solid #5f5f5f;
  box-shadow: 2px 4px 14px rgba(0, 0, 0, 0.35);
  color: #111;
}
.d-title {
  display: flex;
  align-items: center;
  height: 30px;
  padding-left: 8px;
  background: #fff;
}
.d-title span {
  flex: 1;
}
.help {
  width: 20px;
  font-size: 14px;
}
.x {
  margin: 0 17px 0 29px;
}
.x svg {
  width: 12px;
  height: 12px;
}
.d-tabs {
  display: flex;
  align-items: flex-end;
  height: 36px;
  padding-left: 6px;
}
.d-tab {
  height: 25px;
  padding: 0 9px 0 8px;
  border: 1px solid #dcdcdc;
  border-width: 1px 1px 0 0;
}
.d-tab.on {
  height: 28px;
  padding-left: 8px;
  padding-right: 10px;
  background: #fff;
}
.panel {
  margin: 0 7px;
  height: 637px;
  padding: 12px 9px 0 16px;
  background: #fff;
  border: 1px solid #dcdcdc;
  border-top-width: 0;
}
.head {
  display: flex;
  align-items: center;
  gap: 4px;
  margin: 0 0 7px -9px;
  height: 20px;
  font-size: 12px;
  font-weight: 400;
}
.head::after {
  content: "";
  flex: 1;
  height: 1px;
  background: #dcdcdc;
}
.later {
  margin-top: 35px;
}
.preview-head {
  margin-top: 6px;
}
.row {
  display: grid;
  grid-template-columns: 78px 101px 128px 65px;
  align-items: center;
  height: 27px;
  white-space: nowrap;
}
.row + .row {
  margin-top: 4px;
}
.span {
  grid-column: span 2;
}
.combo {
  display: flex;
  width: 119px;
  height: 27px;
  border: 1px solid #9a9a9a;
  background: #fff;
}
.short {
  width: 92px;
}
.combo select {
  appearance: none;
  flex: 1;
  min-width: 0;
  margin: 4px 1px;
  padding-left: 2px;
}
.picked select {
  background: #0078d7;
  color: #fff;
}
.arrow {
  display: flex;
  align-items: center;
  justify-content: center;
  width: 18px;
  background: #e1e1e1;
  border: 1px solid #adadad;
}
.arrow svg {
  width: 10px;
  height: 6px;
}
.spin {
  display: flex;
  width: 65px;
  height: 25px;
  padding: 1px;
  border: 1px solid #9a9a9a;
  background: #fff;
}
.spin input {
  flex: 1;
  min-width: 0;
  padding: 0 0 2px 2px;
}
.spin div {
  display: flex;
  flex-direction: column;
  width: 15px;
}
.spin button {
  flex: 1;
  display: flex;
  align-items: center;
  justify-content: center;
  background: #f0f0f0;
  border: 1px solid #adadad;
}
.up,
.down {
  border: 3px solid transparent;
}
.up {
  border-top: 0;
  border-bottom-color: #111;
}
.down {
  border-bottom: 0;
  border-top-color: #111;
}
.checks {
  margin-top: 3px;
}
.wide {
  margin-top: 9px;
}
.check {
  display: flex;
  align-items: center;
  height: 25px;
}
.check input {
  appearance: none;
  width: 13px;
  height: 13px;
  margin-right: 4px;
  border: 1px solid #333;
  background: #fff;
}
.check input:checked::after {
  content: "";
  display: block;
  width: 4px;
  height: 8px;
  margin: 0 0 0 4px;
  border: solid #222;
  border-width: 0 1px 1px 0;
  transform: rotate(40deg);
}
.off {
  color: #838383;
}
.off input {
  border-color: #ccc;
}
.preview {
  height: 171px;
  width: 372px;
  padding: 6px 48px 0 33px;
  border: 1px solid #555;
  font: 7px/10px "Noto Sans CJK SC", sans-serif;
}
.preview p {
  margin: 0;
  width: 288px;
  color: #c2c2c2;
  word-break: break-all;
  line-break: anywhere;
}
.preview .now {
  color: #222;
  white-space: nowrap;
}
.preview .first {
  text-indent: 14px;
}
.d-foot {
  display: flex;
  padding: 12px 7px 10px 6px;
}
.btn {
  width: 74px;
  height: 29px;
  background: #e1e1e1;
  border: 1px solid #adadad;
}
.tabstop {
  width: 77px;
}
.setdef {
  width: 94px;
  margin: 0 auto 0 35px;
}
.ok {
  border: 2px solid #0078d7;
  margin-right: 10px;
}
.pointer {
  position: absolute;
  left: 28px;
  top: 54px;
  width: 12px;
  height: 20px;
}
</style>
